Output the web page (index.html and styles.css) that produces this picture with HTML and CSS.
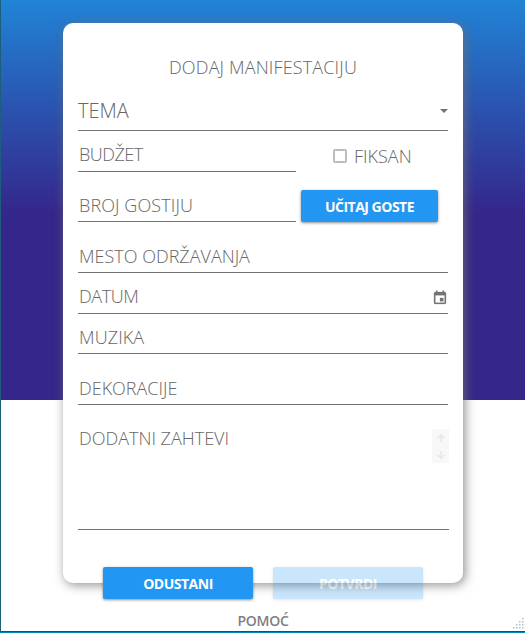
FILE: index.html
```html
<!DOCTYPE html>
<html lang="sr-Latn">
<head>
<meta charset="utf-8">
<title>Dodaj manifestaciju</title>
<link rel="stylesheet" href="styles.css">
</head>
<body>
<div class="window">
  <main class="card">
    <h1 class="title">DODAJ MANIFESTACIJU</h1>
    <div class="field theme"><span>TEMA</span><i class="caret"></i></div>
    <div class="row budget-row">
      <div class="field budget"><span>BUDŽET</span></div>
      <label class="fixed"><i class="box"></i><span>FIKSAN</span></label>
    </div>
    <div class="row guests-row">
      <div class="field guests"><span>BROJ GOSTIJU</span></div>
      <button class="btn load">UČITAJ GOSTE</button>
    </div>
    <div class="field place"><span>MESTO ODRŽAVANJA</span></div>
    <div class="field date"><span>DATUM</span>
      <svg class="calendar" viewBox="0 0 24 24"><path fill="#737373" d="M17 12h-5v5h5v-5zM16 1v2H8V1H6v2H5c-1.110 0-2 .9-2 2v14c0 1.100.890 2 2 2h14c1.100 0 2-.9 2-2V5c0-1.100-.9-2-2-2h-1V1h-2zm3 18H5V8h14v11z"/></svg>
    </div>
    <div class="field music"><span>MUZIKA</span></div>
    <div class="field decor"><span>DEKORACIJE</span></div>
    <div class="field notes"><span>DODATNI ZAHTEVI</span>
      <svg class="scroller" viewBox="0 0 17 34"><path d="M0 0h17v34H0z" fill="#f8f8f8"/><path d="M9 13V6.500M5.500 9.500 9 6l3.500 3.500M9 22v6.500M5.500 25.500 9 29l3.500-3.500" fill="none" stroke="#e6e6e6" stroke-width="1.600"/></svg>
    </div>
    <div class="actions">
      <button class="btn cancel">ODUSTANI</button>
      <button class="btn confirm" disabled>POTVRDI</button>
    </div>
    <div class="help">POMOĆ</div>
  </main>
  <svg class="grip" viewBox="0 0 11 11" fill="#b4bccf"><path d="M9 0h1.500v1.500H9zM6 3h1.500v1.500H6zM9 3h1.500v1.500H9zM3 6h1.500v1.500H3zM6 6h1.500v1.500H6zM9 6h1.500v1.500H9zM0 9h1.500v1.500H0zM3 9h1.500v1.500H3zM6 9h1.500v1.500H6zM9 9h1.500v1.500H9z"/></svg>
</div>
</body>
</html>
```
FILE: styles.css
```css
* { box-sizing: border-box; }
body { margin: 0; font-family: "Open Sans", sans-serif; color: #666; }
.window {
  position: relative;
  height: 633px;
  padding: 23px 0 0 62px;
  overflow: hidden;
  border-left: 1px solid #1c5f7c;
  border-bottom: 1px solid #0088c4;
  box-shadow: inset 0 -1px #17516d;
  background: linear-gradient(#2184d6 0, #2b50ad 115px, #35268a 215px, #35268a 400px, #fff 400px);
}
.card {
  width: 400px;
  height: 560px;
  padding: 0 15px;
  border-radius: 10px;
  background: #fff;
  box-shadow: 2px 2px 11px rgba(112, 112, 112, .8);
}
.title {
  margin: 0;
  padding-top: 32px;
  height: 66px;
  font-size: 18px;
  line-height: 24px;
  font-weight: 340;
  letter-spacing: .15px;
  text-align: center;
}
.row { display: flex; align-items: flex-end; }
.field {
  display: flex;
  align-items: flex-end;
  justify-content: space-between;
  width: 370px;
  padding: 0 0 4px 1px;
  border-bottom: 1px solid #737373;
  font-size: 18px;
  line-height: 24px;
  font-weight: 340;
  white-space: nowrap;
}
.theme { height: 42px; padding: 0 0 7px; font-size: 20px; }
.caret { margin: 0 0 10px; border: 4px solid transparent; border-top-color: #737373; border-bottom: 0; }
.budget-row { height: 41px; }
.budget { width: 218px; height: 41px; padding-bottom: 5px; letter-spacing: -.5px; }
.fixed { display: flex; align-items: center; gap: 7px; margin: 0 0 4px 37px; font-size: 18px; line-height: 24px; font-weight: 340; }
.box { width: 14px; height: 14px; border: 2px solid #bdbdbd; border-radius: 2px; }
.guests-row { height: 50px; }
.guests { width: 218px; height: 50px; letter-spacing: .1px; }
.btn {
  width: 150px;
  height: 32px;
  padding: 1px 0 0;
  border: 0;
  border-radius: 2px;
  background: #2196f3;
  color: #fff;
  font: 700 14px/31px "Open Sans", sans-serif;
  letter-spacing: -.5px;
  box-shadow: 0 1px 3px rgba(0, 0, 0, .45);
}
.load { width: 137px; margin-left: 5px; }
.place { height: 51px; }
.date { height: 41px; padding-bottom: 5px; letter-spacing: -.4px; }
.calendar { width: 16px; height: 16px; margin-bottom: 2px; stroke: #737373; stroke-width: .4; }
.music { height: 40px; letter-spacing: .1px; }
.decor { height: 51px; }
.notes { width: 371px; height: 125px; padding-top: 21px; align-items: flex-start; }
.scroller { width: 17px; height: 34px; margin-top: 3px; }
.actions { display: flex; justify-content: center; gap: 20px; padding-top: 37px; }
.confirm { opacity: .23; }
.help { margin-top: 11px; font-size: 14px; line-height: 22px; font-weight: 600; letter-spacing: -.3px; text-align: center; color: #808080; }
.grip { position: absolute; right: 1px; bottom: 3px; width: 11px; height: 11px; }
```
